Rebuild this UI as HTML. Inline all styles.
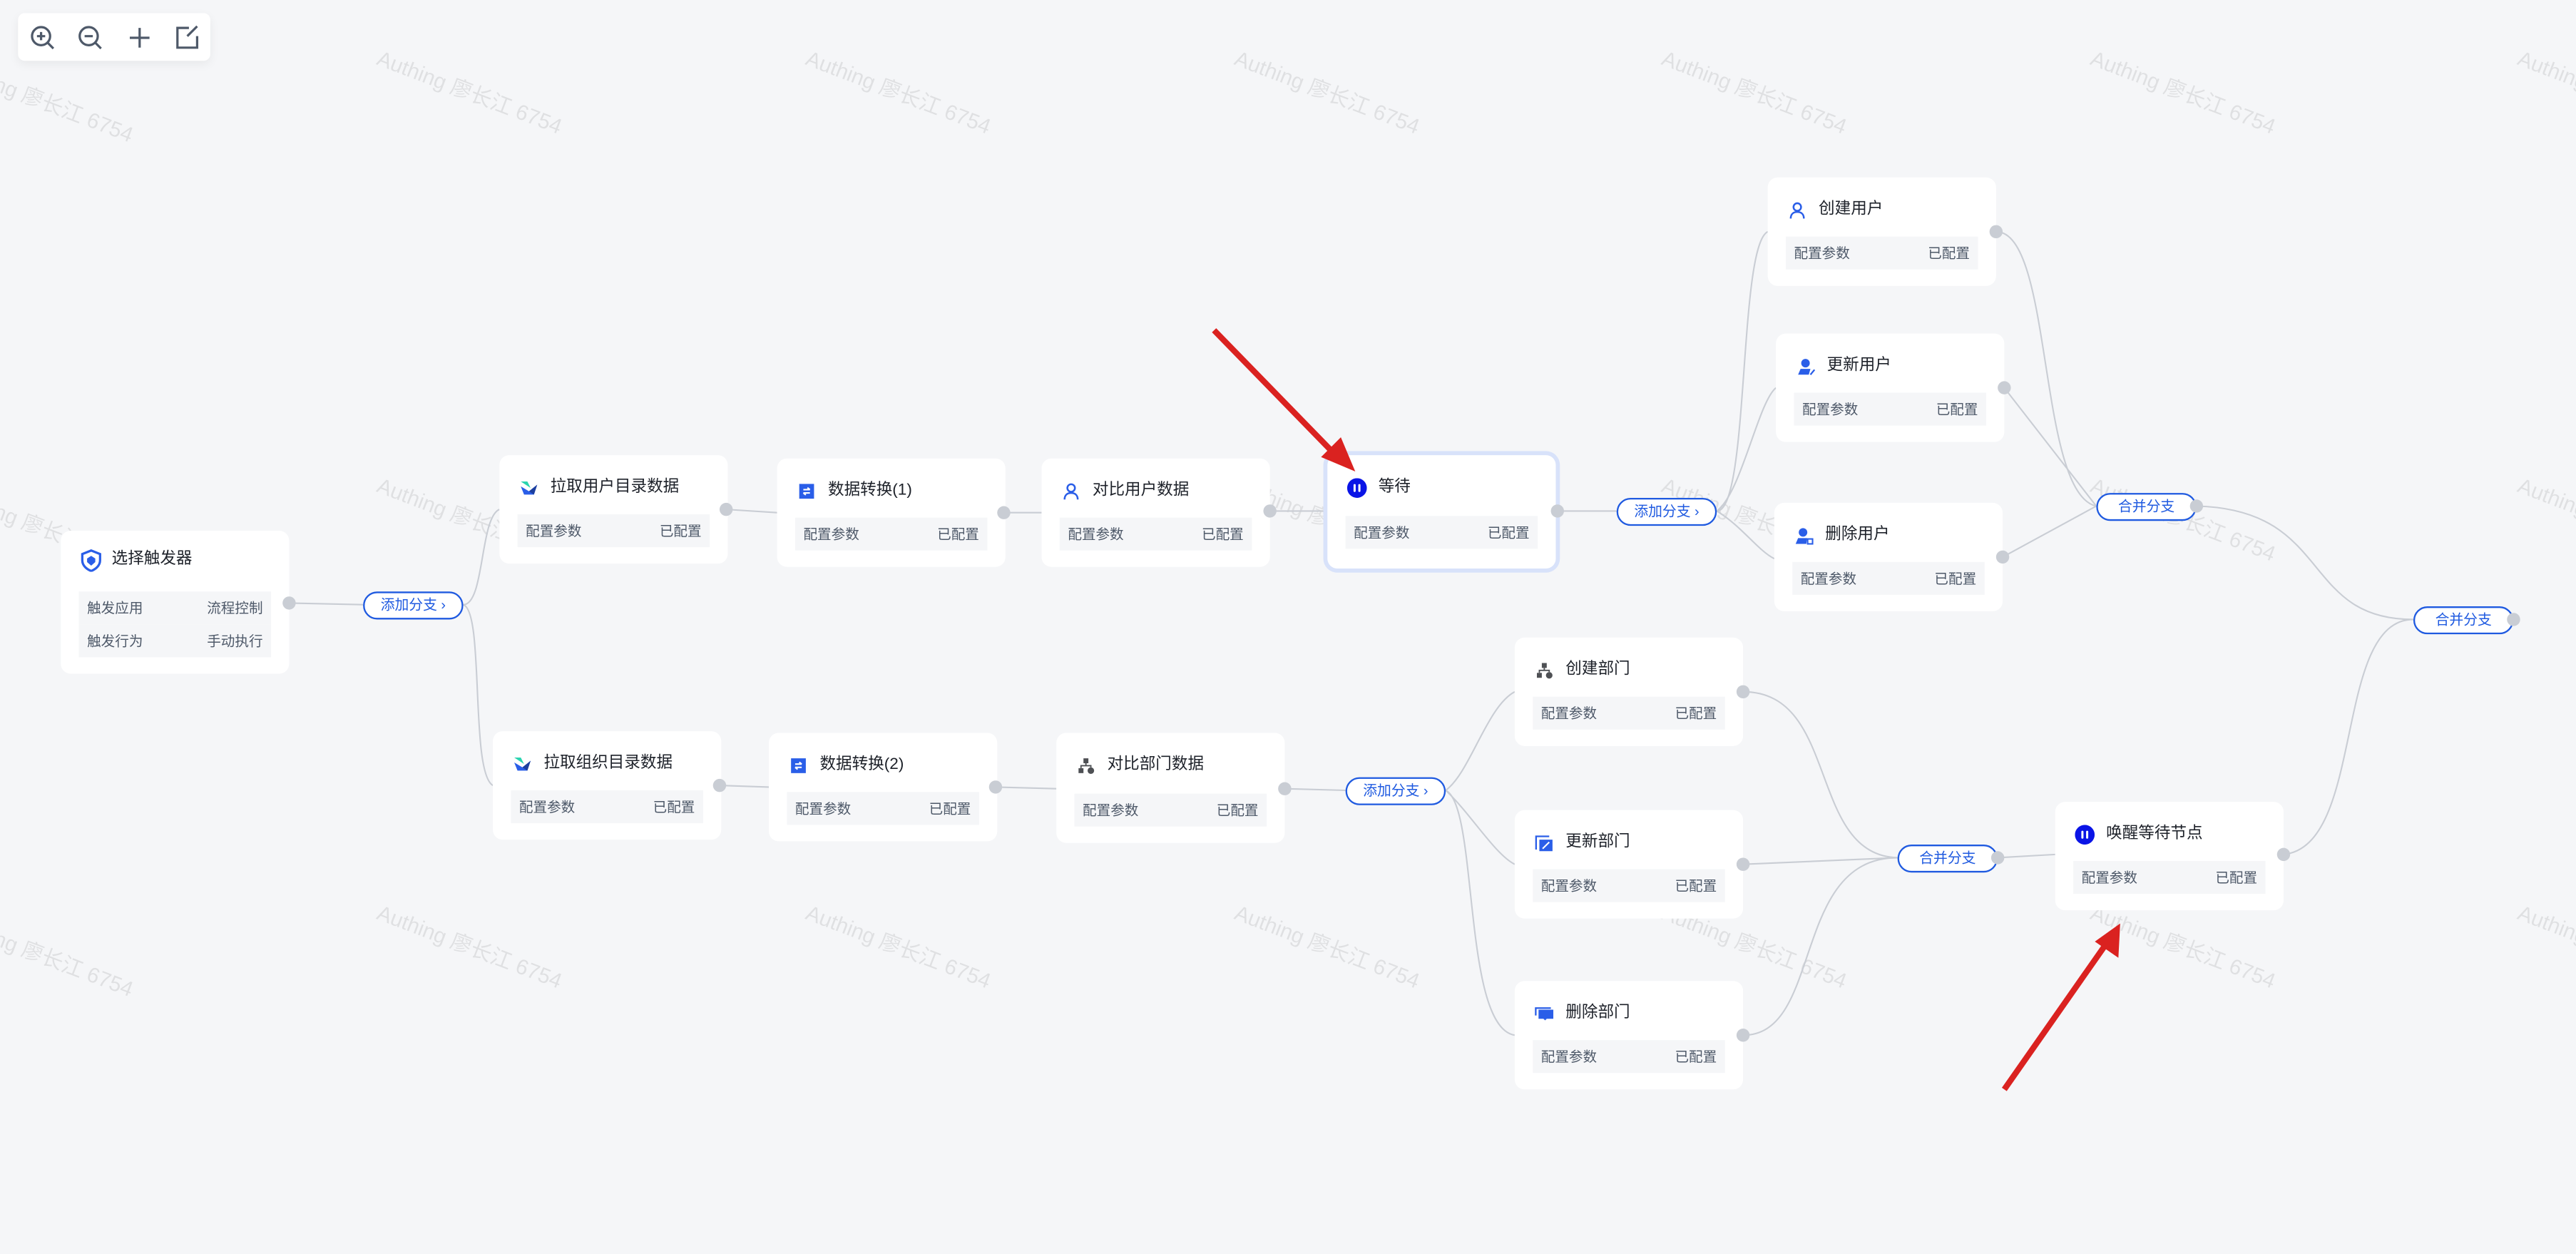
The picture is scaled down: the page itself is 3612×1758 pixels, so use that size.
<!DOCTYPE html>
<html><head><meta charset="utf-8">
<style>
html,body{margin:0;padding:0;}
body{width:3612px;height:1758px;overflow:hidden;background:#f5f6f8;font-family:"Liberation Sans","Noto Sans CJK SC",sans-serif;}
#s{position:absolute;left:0;top:0;width:1568px;height:763px;transform:scale(2.30357);transform-origin:0 0;}
.wm{position:absolute;font-size:13px;color:rgba(0,0,0,0.085);white-space:nowrap;transform:rotate(21deg);transform-origin:0 0;}
.card{position:absolute;width:139px;height:66px;background:#fff;border-radius:6px;}
.card .t{position:absolute;left:31px;top:13px;font-size:9.8px;line-height:14px;color:#1d2129;white-space:nowrap;}
.card .ic{position:absolute;left:12px;top:14px;width:12px;height:12px;}
.card .r{position:absolute;left:11px;right:11px;height:20px;background:#f5f6f8;font-size:8.5px;line-height:20px;color:#4e5969;}
.r span{position:absolute;left:5px}.r b{position:absolute;right:5px;font-weight:normal}
.dot{position:absolute;width:8px;height:8px;border-radius:50%;background:#c9cdd4;}
.pill{position:absolute;width:59px;height:15px;border:1.4px solid #1f5ae0;border-radius:9px;background:#fff;color:#1f5ae0;font-size:8.6px;line-height:15px;text-align:center;white-space:nowrap;}
.tb{position:absolute;left:11px;top:8px;width:117px;height:29px;background:#fff;border-radius:4px;box-shadow:0 2px 6px rgba(0,0,0,0.06);}
</style></head><body><div id="s">

<div class="wm" style="left:-27px;top:30px">Authing 廖长江 6754</div>
<div class="wm" style="left:234px;top:25px">Authing 廖长江 6754</div>
<div class="wm" style="left:495px;top:25px">Authing 廖长江 6754</div>
<div class="wm" style="left:756px;top:25px">Authing 廖长江 6754</div>
<div class="wm" style="left:1016px;top:25px">Authing 廖长江 6754</div>
<div class="wm" style="left:1277px;top:25px">Authing 廖长江 6754</div>
<div class="wm" style="left:1537px;top:25px">Authing 廖长江 6754</div>
<div class="wm" style="left:-27px;top:290px">Authing 廖长江 6754</div>
<div class="wm" style="left:234px;top:285px">Authing 廖长江 6754</div>
<div class="wm" style="left:495px;top:285px">Authing 廖长江 6754</div>
<div class="wm" style="left:756px;top:285px">Authing 廖长江 6754</div>
<div class="wm" style="left:1016px;top:285px">Authing 廖长江 6754</div>
<div class="wm" style="left:1277px;top:285px">Authing 廖长江 6754</div>
<div class="wm" style="left:1537px;top:285px">Authing 廖长江 6754</div>
<div class="wm" style="left:-27px;top:550px">Authing 廖长江 6754</div>
<div class="wm" style="left:234px;top:545px">Authing 廖长江 6754</div>
<div class="wm" style="left:495px;top:545px">Authing 廖长江 6754</div>
<div class="wm" style="left:756px;top:545px">Authing 廖长江 6754</div>
<div class="wm" style="left:1016px;top:545px">Authing 廖长江 6754</div>
<div class="wm" style="left:1277px;top:545px">Authing 廖长江 6754</div>
<div class="wm" style="left:1537px;top:545px">Authing 廖长江 6754</div>

<svg style="position:absolute;left:0;top:0" width="1568" height="763" fill="none" stroke="#c9cdd4" stroke-width="0.9">
<path d="M176 367 L221 368"/>
<path d="M282 368 C295 368 292 315 304 310"/>
<path d="M282 368 C295 372 286 470 300 478"/>
<path d="M442 310 L473 312"/><path d="M611 312 L634 312"/><path d="M773 311 L808 311"/><path d="M948 311 L984 311"/>
<path d="M1045 311 C1065 311 1058 150 1076 141"/>
<path d="M1045 311 C1060 300 1070 245 1081 236"/>
<path d="M1045 311 C1060 320 1070 335 1080 340"/>
<path d="M1215 141 C1250 141 1240 300 1276 308"/>
<path d="M1220 236 L1276 308"/>
<path d="M1219 339 L1276 308"/>
<path d="M1337 308 C1420 310 1400 377 1469 377"/>
<path d="M438 478 L468 479"/><path d="M606 479 L643 480"/><path d="M782 480 L819 481"/>
<path d="M880 481 C895 470 905 430 922 421"/>
<path d="M880 481 C895 495 910 520 922 526"/>
<path d="M880 481 C900 490 890 625 922 630"/>
<path d="M1061 421 C1120 421 1100 520 1155 522"/>
<path d="M1061 526 L1155 522"/>
<path d="M1061 630 C1110 630 1090 522 1155 522"/>
<path d="M1216 522 L1251 520"/>
<path d="M1390 520 C1440 515 1420 377 1469 377"/>
</svg>

<div class="tb">
<svg width="117" height="29" fill="none" stroke="#4e5969" stroke-width="1.4">
<circle cx="14" cy="14" r="5.5"/><path d="M18 18 L21.5 21.5M11.5 14h5M14 11.5v5"/>
<circle cx="43" cy="14" r="5.5"/><path d="M47 18 L50.5 21.5M40.5 14h5"/>
<path d="M68 15h12M74 9v12"/>
<path d="M104 9H97v12h12v-7M103 14l6-6"/>
</svg></div>

<div class="card" style="left:37px;top:323px;height:87px">
<svg class="ic" viewBox="0 0 12 12" style="left:12px;top:11px;width:13px;height:14px"><path d="M6 0.5 L11 2.5 V6 C11 9 8.5 11 6 12 C3.5 11 1 9 1 6 V2.5Z" fill="#fff" stroke="#2a5ee8" stroke-width="1.3"/><path d="M6 3.5 L8.3 5 V7 L6 9 L3.7 7 V5Z" fill="#2a5ee8"/></svg>
<div class="t" style="top:11px">选择触发器</div>
<div class="r" style="top:37px"><span>触发应用</span><b>流程控制</b></div>
<div class="r" style="top:57px"><span>触发行为</span><b>手动执行</b></div>
</div>
<div class="dot" style="left:172px;top:363px"></div>
<div class="pill" style="left:221px;top:360px">添加分支 ›</div>

<div class="card" style="left:304px;top:277px">
<svg class="ic" viewBox="0 0 12 12"><path d="M1 2 L5 2 L7 6 Z" fill="#2bd4b0"/><path d="M1 5 L6 8 L11 4 L9 10 L3 10 Z" fill="#2a5ee8"/><path d="M6 8 L11 4 L9 10Z" fill="#1c3f9e"/></svg>
<div class="t">拉取用户目录数据</div><div class="r" style="top:36px"><span>配置参数</span><b>已配置</b></div></div>
<div class="dot" style="left:438px;top:306px"></div>

<div class="card" style="left:473px;top:279px">
<svg class="ic" viewBox="0 0 12 12"><rect x="1.5" y="1.5" width="9" height="9" fill="#2a5ee8"/><path d="M4 5h4M6.5 3.8 8 5M8 7H4M5.5 8.2 4 7" stroke="#fff" stroke-width="0.9" fill="none"/></svg>
<div class="t">数据转换(1)</div><div class="r" style="top:36px"><span>配置参数</span><b>已配置</b></div></div>
<div class="dot" style="left:607px;top:308px"></div>

<div class="card" style="left:634px;top:279px">
<svg class="ic" viewBox="0 0 12 12" fill="none" stroke="#2a5ee8" stroke-width="1.1"><circle cx="6" cy="4" r="2.3"/><path d="M2 11 C2 8 4 7 6 7 C8 7 10 8 10 11"/></svg>
<div class="t">对比用户数据</div><div class="r" style="top:36px"><span>配置参数</span><b>已配置</b></div></div>
<div class="dot" style="left:769px;top:307px"></div>

<div class="card" style="left:808px;top:277px;height:69px;box-shadow:0 0 0 2.5px #d8e2fa">
<svg class="ic" viewBox="0 0 12 12" style="top:14px"><circle cx="6" cy="6" r="6" fill="#0a14e6"/><rect x="3.9" y="3.6" width="1.3" height="4.8" rx=".6" fill="#fff"/><rect x="6.8" y="3.6" width="1.3" height="4.8" rx=".6" fill="#fff"/></svg>
<div class="t" style="top:13px">等待</div><div class="r" style="top:37px"><span>配置参数</span><b>已配置</b></div></div>
<div class="dot" style="left:944px;top:307px"></div>
<div class="pill" style="left:984px;top:303px">添加分支 ›</div>

<div class="card" style="left:1076px;top:108px">
<svg class="ic" viewBox="0 0 12 12" fill="none" stroke="#2a5ee8" stroke-width="1.1"><circle cx="6" cy="4" r="2.3"/><path d="M2 11 C2 8 4 7 6 7 C8 7 10 8 10 11"/></svg>
<div class="t">创建用户</div><div class="r" style="top:36px"><span>配置参数</span><b>已配置</b></div></div>
<div class="dot" style="left:1211px;top:137px"></div>

<div class="card" style="left:1081px;top:203px">
<svg class="ic" viewBox="0 0 12 12"><circle cx="6" cy="4" r="2.6" fill="#2a5ee8"/><path d="M1.5 11 L3 7.5 H9 L8 11Z" fill="#2a5ee8"/><path d="M9 11 L11.5 8" stroke="#2a5ee8" stroke-width="1"/></svg>
<div class="t">更新用户</div><div class="r" style="top:36px"><span>配置参数</span><b>已配置</b></div></div>
<div class="dot" style="left:1216px;top:232px"></div>

<div class="card" style="left:1080px;top:306px">
<svg class="ic" viewBox="0 0 12 12"><circle cx="5.5" cy="4" r="2.6" fill="#2a5ee8"/><path d="M1 11 L2.5 7.5 H8 L7.5 11Z" fill="#2a5ee8"/><rect x="8.3" y="8" width="3" height="3" fill="none" stroke="#2a5ee8" stroke-width="0.9"/></svg>
<div class="t">删除用户</div><div class="r" style="top:36px"><span>配置参数</span><b>已配置</b></div></div>
<div class="dot" style="left:1215px;top:335px"></div>

<div class="pill" style="left:1276px;top:300px">合并分支</div>
<div class="dot" style="left:1333px;top:304px"></div>
<div class="pill" style="left:1469px;top:369px">合并分支</div>
<div class="dot" style="left:1526px;top:373px"></div>

<div class="card" style="left:300px;top:445px">
<svg class="ic" viewBox="0 0 12 12"><path d="M1 2 L5 2 L7 6 Z" fill="#2bd4b0"/><path d="M1 5 L6 8 L11 4 L9 10 L3 10 Z" fill="#2a5ee8"/><path d="M6 8 L11 4 L9 10Z" fill="#1c3f9e"/></svg>
<div class="t">拉取组织目录数据</div><div class="r" style="top:36px"><span>配置参数</span><b>已配置</b></div></div>
<div class="dot" style="left:434px;top:474px"></div>

<div class="card" style="left:468px;top:446px">
<svg class="ic" viewBox="0 0 12 12"><rect x="1.5" y="1.5" width="9" height="9" fill="#2a5ee8"/><path d="M4 5h4M6.5 3.8 8 5M8 7H4M5.5 8.2 4 7" stroke="#fff" stroke-width="0.9" fill="none"/></svg>
<div class="t">数据转换(2)</div><div class="r" style="top:36px"><span>配置参数</span><b>已配置</b></div></div>
<div class="dot" style="left:602px;top:475px"></div>

<div class="card" style="left:643px;top:446px;height:67px">
<svg class="ic" viewBox="0 0 12 12" fill="#4e5054"><rect x="4.5" y="1.5" width="3" height="3"/><rect x="1.5" y="7.5" width="3" height="3"/><circle cx="9" cy="9" r="2"/><path d="M6 4.5V6H3V7.5M6 6H9V7" stroke="#4e5054" fill="none" stroke-width="0.8"/></svg>
<div class="t">对比部门数据</div><div class="r" style="top:37px"><span>配置参数</span><b>已配置</b></div></div>
<div class="dot" style="left:778px;top:476px"></div>
<div class="pill" style="left:819px;top:473px">添加分支 ›</div>

<div class="card" style="left:922px;top:388px">
<svg class="ic" viewBox="0 0 12 12" fill="#4e5054"><rect x="4.5" y="1.5" width="3" height="3"/><rect x="1.5" y="7.5" width="3" height="3"/><circle cx="9" cy="9" r="2"/><path d="M6 4.5V6H3V7.5M6 6H9V7" stroke="#4e5054" fill="none" stroke-width="0.8"/></svg>
<div class="t">创建部门</div><div class="r" style="top:36px"><span>配置参数</span><b>已配置</b></div></div>
<div class="dot" style="left:1057px;top:417px"></div>

<div class="card" style="left:922px;top:493px">
<svg class="ic" viewBox="0 0 12 12"><path d="M1 10V2H9" stroke="#2a5ee8" stroke-width="1" fill="none"/><rect x="3" y="4" width="8" height="7" fill="#2a5ee8"/><path d="M5 9.5 L9 5.5" stroke="#fff" stroke-width="0.9"/></svg>
<div class="t">更新部门</div><div class="r" style="top:36px"><span>配置参数</span><b>已配置</b></div></div>
<div class="dot" style="left:1057px;top:522px"></div>

<div class="card" style="left:922px;top:597px">
<svg class="ic" viewBox="0 0 12 12"><path d="M0.8 7V2.5H10" stroke="#2a5ee8" stroke-width="1" fill="none"/><path d="M2.5 3.5H11.5V9H7.5L6.5 10L5.5 9H2.5Z" fill="#2a5ee8"/></svg>
<div class="t">删除部门</div><div class="r" style="top:36px"><span>配置参数</span><b>已配置</b></div></div>
<div class="dot" style="left:1057px;top:626px"></div>

<div class="pill" style="left:1155px;top:514px">合并分支</div>
<div class="dot" style="left:1212px;top:518px"></div>

<div class="card" style="left:1251px;top:488px">
<svg class="ic" viewBox="0 0 12 12"><circle cx="6" cy="6" r="6" fill="#0a14e6"/><rect x="3.9" y="3.6" width="1.3" height="4.8" rx=".6" fill="#fff"/><rect x="6.8" y="3.6" width="1.3" height="4.8" rx=".6" fill="#fff"/></svg>
<div class="t">唤醒等待节点</div><div class="r" style="top:36px"><span>配置参数</span><b>已配置</b></div></div>
<div class="dot" style="left:1386px;top:516px"></div>

<svg style="position:absolute;left:0;top:0" width="1568" height="763">
<path d="M739 201 L814 278" stroke="#da2220" stroke-width="3.6"/>
<path d="M824 286 L805 278 L816 267 Z" fill="#da2220" stroke="#da2220" stroke-width="1"/>
<path d="M1220 663 L1283 573" stroke="#da2220" stroke-width="3.6"/>
<path d="M1290 563 L1289 582 L1276 573 Z" fill="#da2220" stroke="#da2220" stroke-width="1"/>
</svg>

</div></body></html>
